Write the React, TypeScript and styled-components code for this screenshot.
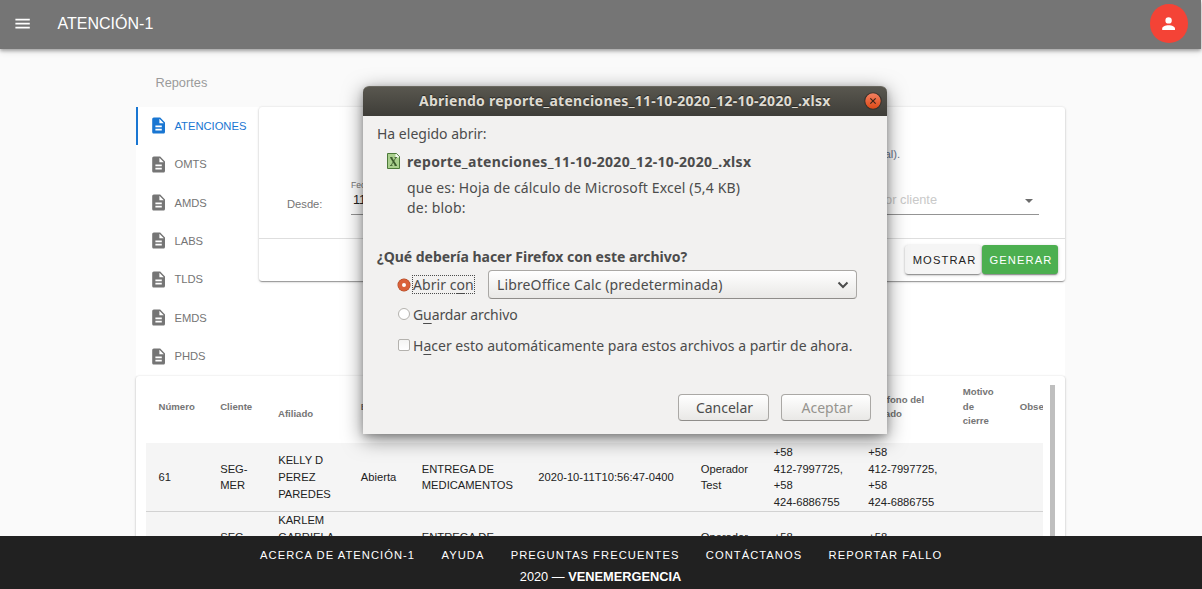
import React from "react";
import styled, { createGlobalStyle } from "styled-components";

const Global = createGlobalStyle`
  * { box-sizing: border-box; }
  body { margin: 0; background: #fafafa; overflow: hidden; font-family: "Liberation Sans", Arial, sans-serif; }
`;

const Page = styled.div`
  position: relative;
  display: flex;
  flex-direction: column;
  width: 1202px;
  height: 589px;
  overflow: hidden;
  background: #fafafa;
`;
const Header = styled.header`
  z-index: 2;
  display: flex;
  align-items: center;
  flex: none;
  width: 1201px;
  height: 49px;
  padding: 0 13px 2px 13px;
  background: #757575;
  color: #fff;
  box-shadow: 0 2px 3px rgba(0, 0, 0, 0.26), 0 3px 6px rgba(0, 0, 0, 0.12);
`;
const Title = styled.h1`
  flex: 1;
  margin: 0 0 0 25.4px;
  font-size: 16px;
  font-weight: 400;
  line-height: 24px;
`;
const Avatar = styled.div`
  display: grid;
  place-items: center;
  width: 38.4px;
  height: 38.4px;
  border-radius: 50%;
  background: #f44336;
`;
const Glyph = styled.svg<{ $size: number }>`
  display: block;
  flex: none;
  width: ${(p) => p.$size}px;
  height: ${(p) => p.$size}px;
  fill: currentColor;
`;
const Main = styled.main`
  flex: 1;
  min-height: 0;
  width: 929px;
  margin-left: 136px;
  overflow-x: visible;
  overflow-y: clip;
`;
const Crumb = styled.div`
  height: 58px;
  padding: 25px 0 0 19.4px;
  font-size: 12.8px;
  line-height: 18px;
  color: #9a9a9a;
`;
const Panel = styled.section`
  display: flex;
  align-items: flex-start;
  height: 269px;
  background: #fff;
`;
const Tabs = styled.nav`
  display: flex;
  flex-direction: column;
  width: 123px;
`;
const Tab = styled.div<{ $active?: boolean }>`
  display: flex;
  align-items: center;
  gap: 6.6px;
  height: 38.4px;
  padding: 0 0 0.8px 10.7px;
  border-left: 2px solid ${(p) => (p.$active ? "#1976d2" : "transparent")};
  color: ${(p) => (p.$active ? "#1976d2" : "#757575")};
  font-size: 11.2px;
`;
const Card = styled.div`
  background: #fff;
  border-radius: 3px;
  box-shadow: 0 2px 1px -1px rgba(0, 0, 0, 0.2), 0 1px 1px rgba(0, 0, 0, 0.14), 0 1px 3px rgba(0, 0, 0, 0.16),
    0 0 2px rgba(0, 0, 0, 0.1);
`;
const FilterCard = styled(Card)`
  flex: 1;
  height: 174px;
`;
const Filters = styled.div`
  display: flex;
  height: 132px;
  padding: 38px 26px 0 28px;
  border-bottom: 1px solid #dedede;
  justify-content: space-between;
`;
const FromField = styled.div`
  display: flex;
  gap: 28.5px;
  padding-top: 33px;
  font-size: 11.2px;
  color: #757575;
`;
const FromLabel = styled.span`
  padding-top: 20px;
`;
const DateField = styled.div`
  width: 130px;
  height: 37px;
  border-bottom: 1px solid #949494;
`;
const FloatLabel = styled.div`
  height: 14px;
  font-size: 8.6px;
  line-height: 14px;
  color: #777;
`;
const DateValue = styled.div`
  padding-left: 2px;
  font-size: 12.8px;
  line-height: 16px;
  color: #222;
`;
const ClientField = styled.div`
  width: 280px;
`;
const Hint = styled.div`
  height: 39px;
  padding-right: 139px;
  font-size: 11.2px;
  line-height: 18px;
  text-align: right;
  color: #687690;
`;
const Select = styled.div`
  display: flex;
  align-items: center;
  justify-content: space-between;
  height: 31px;
  border-bottom: 1px solid #949494;
  padding-left: 119px;
  font-size: 12.8px;
  color: #c9c9c9;
`;
const ClientText = styled.span`
  white-space: nowrap;
`;
const Arrow = styled.span`
  width: 0;
  margin: 4px 6px 0 0;
  border: 4px solid transparent;
  border-top-color: #6c6c6c;
  border-bottom: 0;
`;
const CardActions = styled.div`
  display: flex;
  justify-content: flex-end;
  gap: 1px;
  padding: 6px 7px 0 0;
`;
const ActionButton = styled.button<{ $green?: boolean }>`
  width: 76px;
  height: 29px;
  padding: 0 0 0 ${(p) => (p.$green ? 1 : 2)}px;
  border: 0;
  border-radius: 3px;
  background: ${(p) => (p.$green ? "#4caf50" : "#f5f5f5")};
  color: ${(p) => (p.$green ? "#fff" : "#222")};
  font: 11.2px "Liberation Sans", Arial, sans-serif;
  letter-spacing: 1.1px;
  white-space: nowrap;
  text-indent: 1px;
  box-shadow: 0 2px 1px -1px rgba(0, 0, 0, 0.25), 0 1px 2px rgba(0, 0, 0, 0.25), 0 1px 4px rgba(0, 0, 0, 0.12);
`;
const TableCard = styled(Card)`
  display: flex;
  gap: 7px;
  height: 240px;
  padding: 9px 10px 0;
`;
const ScrollBar = styled.div`
  width: 5px;
  background: #bfbfbf;
`;
const Table = styled.div`
  width: 897px;
  height: 240px;
  overflow: hidden;
`;
const Row = styled.div<{ $head?: boolean }>`
  display: grid;
  grid-template-columns: 62px 58px 82.6px 61px 116.5px 162.5px 73px 94.5px 94.5px 57px 80px;
  align-items: center;
  width: 943px;
  height: ${(p) => (p.$head ? "58px" : "69px")};
  padding: ${(p) => (p.$head ? "0 0 14px" : "0.8px 0 0")};
  border-bottom: ${(p) => (p.$head ? "0" : "1px solid #d2d2d2")};
  background: ${(p) => (p.$head ? "#fff" : "#f5f5f5")};
  color: ${(p) => (p.$head ? "#757575" : "#222")};
  font-size: ${(p) => (p.$head ? "9.6px" : "11.2px")};
  font-weight: ${(p) => (p.$head ? 700 : 400)};
  line-height: ${(p) => (p.$head ? "14.4px" : "16.8px")};
  &:last-child {
    height: 68px;
    padding-top: 0;
  }
`;
const Cell = styled.div<{ $drop?: boolean }>`
  padding: ${(p) => (p.$drop ? "15px 0 0 12px" : "0 0 0 12.2px")};
  white-space: pre;
  &:first-child {
    padding-left: 12.5px;
  }
`;
const Footer = styled.footer`
  z-index: 2;
  flex: none;
  height: 53px;
  padding-top: 11px;
  background: #212121;
  color: #fff;
  text-align: center;
`;
const Links = styled.div`
  display: flex;
  justify-content: center;
  gap: 26.3px;
  height: 18px;
  padding-left: 0.4px;
  font-size: 11.2px;
  line-height: 17px;
  letter-spacing: 1.05px;
`;
const Copy = styled.div`
  padding: 4px 1px 0 0;
  font-size: 12.8px;
  line-height: 16px;
`;

const Dialog = styled.div`
  position: absolute;
  z-index: 5;
  left: 363px;
  top: 86px;
  width: 524px;
  height: 348px;
  border-radius: 6px 6px 0 0;
  background: #f2f1f0;
  color: #4c4c4c;
  font-family: "Noto Sans", "Open Sans", sans-serif;
  font-size: 14px;
  box-shadow: 0 5px 20px rgba(0, 0, 0, 0.5), 0 2px 6px rgba(0, 0, 0, 0.2);
`;
const TitleBar = styled.div`
  display: flex;
  align-items: center;
  height: 30px;
  padding: 0 5px 1px 56px;
  border-radius: 6px 6px 0 0;
  border-top: 1px solid #6a6860;
  background: linear-gradient(#59574f, #3e3d38);
  color: #dfdbd2;
  font-weight: 700;
`;
const Caption = styled.div`
  flex: 1;
  padding-bottom: 1px;
  text-shadow: 0 -1px 1px rgba(0, 0, 0, 0.5);
`;
const Body = styled.div`
  height: 318px;
  padding: 7px 17px 0 14px;
`;
const Fit = styled.span<{ $ls?: number }>`
  letter-spacing: ${(p) => p.$ls ?? 0}px;
  white-space: nowrap;
`;
const Line = styled.div<{ $h?: number; $top?: number; $indent?: number; $bold?: boolean; $gap?: number }>`
  display: flex;
  align-items: center;
  gap: ${(p) => p.$gap ?? 0}px;
  height: ${(p) => p.$h ?? 20}px;
  margin-top: ${(p) => p.$top ?? 0}px;
  padding-left: ${(p) => p.$indent ?? 0}px;
  font-weight: ${(p) => (p.$bold ? 700 : 400)};
`;
const Radio = styled.span<{ $on?: boolean }>`
  flex: none;
  width: 12px;
  height: 12px;
  margin-right: 3px;
  border-radius: 50%;
  border: ${(p) => (p.$on ? "4px solid #d9613a" : "1px solid #b4b2ae")};
  background: #fff;
  box-shadow: ${(p) => (p.$on ? "0 0 0 0.5px #a8441f" : "none")};
`;
const Check = styled.span`
  flex: none;
  width: 12px;
  height: 12px;
  margin-right: 3px;
  border: 1px solid #b4b2ae;
  border-radius: 2px;
  background: linear-gradient(#f4f4f3, #fff);
`;
const Focus = styled.span`
  flex: none;
  width: 63px;
  height: 19px;
  margin: 0 13px 0 -1px;
  border: 1px dotted #4c4c4c;
  line-height: 17px;
`;
const Accel = styled.span`
  text-decoration: underline;
  text-decoration-thickness: 1px;
  text-underline-offset: 3px;
  text-decoration-skip-ink: none;
`;
const Combo = styled.div`
  display: flex;
  flex: none;
  align-items: center;
  justify-content: space-between;
  width: 369px;
  height: 29px;
  padding: 0 7px 0 8px;
  border: 1px solid #aaa8a5;
  border-bottom-color: #8f8d8a;
  border-radius: 4px;
  background: linear-gradient(#fff, #e9e8e6);
`;
const Buttons = styled.div`
  display: flex;
  justify-content: flex-end;
  gap: 12px;
  margin: 39px -1px 0 0;
`;
const Button = styled.button<{ $off?: boolean; $w: number }>`
  width: ${(p) => p.$w}px;
  height: 27px;
  padding: 0 0 0 2px;
  border: 1px solid #aaa8a5;
  border-bottom-color: #8f8d8a;
  border-radius: 4px;
  background: linear-gradient(#fff, #e9e8e6);
  color: ${(p) => (p.$off ? "#96948f" : "#4c4c4c")};
  font: 14px "Noto Sans", sans-serif;
`;

const DocIcon = () => (
  <Glyph $size={19.2} viewBox="0 0 24 24">
    <path d="M14 2H6c-1.100 0-1.990.9-1.990 2L4 20c0 1.100.89 2 1.990 2H18c1.100 0 2-.9 2-2V8l-6-6zm2 16H8v-2h8v2zm0-4H8v-2h8v2zm-3-5V3.500L18.500 9H13z" />
  </Glyph>
);

const tabs = ["ATENCIONES", "OMTS", "AMDS", "LABS", "TLDS", "EMDS", "PHDS"];
const head = ["Número", "Cliente", "Afiliado", "Estado", "", "", "", "", "Teléfono del\nafiliado", "Motivo\nde\ncierre", "Observación"];
const phones = "+58\n412-7997725,\n+58\n424-6886755";
const rows = [
  ["61", "SEG-\nMER", "KELLY D\nPEREZ\nPAREDES", "Abierta", "ENTREGA DE\nMEDICAMENTOS", "2020-10-11T10:56:47-0400", "Operador\nTest", phones, phones, "", ""],
  ["", "SEG-\n ", "KARLEM\nGABRIELA\n\n ", "", "ENTREGA DE\n ", "", "Operador\n ", "+58\n ", "+58\n ", "", ""],
];
const links = ["ACERCA DE ATENCIÓN-1", "AYUDA", "PREGUNTAS FRECUENTES", "CONTÁCTANOS", "REPORTAR FALLO"];

export default function App() {
  return (
    <Page>
      <Global />
      <Header>
        <Glyph $size={19.2} viewBox="0 0 24 24">
          <path d="M3 6h18v2H3V6m0 5h18v2H3v-2m0 5h18v2H3v-2z" />
        </Glyph>
        <Title>ATENCIÓN-1</Title>
        <Avatar>
          <Glyph $size={19.2} viewBox="0 0 24 24">
            <path d="M12 4a4 4 0 0 1 4 4 4 4 0 0 1-4 4 4 4 0 0 1-4-4 4 4 0 0 1 4-4m0 10c4.420 0 8 1.790 8 4v2H4v-2c0-2.210 3.580-4 8-4z" />
          </Glyph>
        </Avatar>
      </Header>
      <Main>
        <Crumb>Reportes</Crumb>
        <Panel>
          <Tabs>
            {tabs.map((t, i) => (
              <Tab key={t} $active={i === 0}>
                <DocIcon />
                {t}
              </Tab>
            ))}
          </Tabs>
          <FilterCard>
            <Filters>
              <FromField>
                <FromLabel>Desde:</FromLabel>
                <DateField>
                  <FloatLabel>Fecha</FloatLabel>
                  <DateValue>11-10-2020</DateValue>
                </DateField>
              </FromField>
              <ClientField>
                <Hint>(opcional).</Hint>
                <Select>
                  <ClientText>por cliente</ClientText>
                  <Arrow />
                </Select>
              </ClientField>
            </Filters>
            <CardActions>
              <ActionButton>MOSTRAR</ActionButton>
              <ActionButton $green>GENERAR</ActionButton>
            </CardActions>
          </FilterCard>
        </Panel>
        <TableCard>
          <Table>
            <Row $head>
              {head.map((h, i) => (
                <Cell key={i} $drop={i === 2}>{h}</Cell>
              ))}
            </Row>
            {rows.map((r, i) => (
              <Row key={i}>
                {r.map((c, j) => (
                  <Cell key={j}>{c}</Cell>
                ))}
              </Row>
            ))}
          </Table>
          <ScrollBar />
        </TableCard>
      </Main>
      <Footer>
        <Links>
          {links.map((l) => (
            <span key={l}>{l}</span>
          ))}
        </Links>
        <Copy>
          2020 — <b>VENEMERGENCIA</b>
        </Copy>
      </Footer>

      <Dialog>
        <TitleBar>
          <Caption>
            <Fit $ls={0.26}>Abriendo reporte_atenciones_11-10-2020_12-10-2020_.xlsx</Fit>
          </Caption>
          <Glyph $size={18} viewBox="0 0 17 17">
            <defs>
              <linearGradient id="close" x1="0" y1="0" x2="0" y2="1">
                <stop offset="0" stopColor="#f58263" />
                <stop offset="1" stopColor="#dd4814" />
              </linearGradient>
            </defs>
            <circle cx="8.500" cy="8.500" r="7.800" fill="url(#close)" stroke="#35322d" />
            <path d="M6 6l5 5M11 6l-5 5" stroke="#3c2418" strokeWidth="1.100" />
          </Glyph>
        </TitleBar>
        <Body>
          <Line $h={20}><Fit>Ha elegido abrir:</Fit></Line>
          <Line $h={33} $top={2} $indent={8} $gap={5} $bold>
            <Glyph $size={17} viewBox="0 0 17 17">
              <path d="M2.500.5h9l3 3v12h-12z" fill="#a9cf8d" stroke="#4d7a3a" />
              <path d="M10.500 1h1l2.500 2.500v1h-3.500z" fill="#f4f8f0" />
              <path d="M6 4.500l5 8" stroke="#3b5a2c" strokeWidth="1.700" />
              <path d="M11 4.500l-5 8M5 12.500h2.500M9.500 12.500h2.500M5 4.500h2.500M9.500 4.500h2.500" stroke="#3b5a2c" strokeWidth="0.800" />
            </Glyph>
            <Fit $ls={0.32}>reporte_atenciones_11-10-2020_12-10-2020_.xlsx</Fit>
          </Line>
          <Line $h={18} $indent={30}><Fit $ls={0.13}>que es: Hoja de cálculo de Microsoft Excel (5,4 KB)</Fit></Line>
          <Line $h={22} $indent={30}><Fit $ls={0.2}>de: blob:</Fit></Line>
          <Line $top={28} $bold><Fit $ls={-0.02}>¿Qué debería hacer Firefox con este archivo?</Fit></Line>
          <Line $h={29} $top={4} $indent={21}>
            <Radio $on />
            <Focus><Fit $ls={0.05}>Abrir c<Accel>o</Accel>n</Fit></Focus>
            <Combo>
              <Fit $ls={0.13}>LibreOffice Calc (predeterminada)</Fit>
              <Glyph $size={12} viewBox="0 0 12 12">
                <path d="M1.500 3.500l4.500 4.500 4.500-4.500" fill="none" stroke="#4c4c4c" strokeWidth="2" />
              </Glyph>
            </Combo>
          </Line>
          <Line $top={5} $indent={21}>
            <Radio />
            <Fit $ls={-0.1}>G<Accel>u</Accel>ardar archivo</Fit>
          </Line>
          <Line $top={11} $indent={21}>
            <Check />
            <Fit $ls={0.01}>H<Accel>a</Accel>cer esto automáticamente para estos archivos a partir de ahora.</Fit>
          </Line>
          <Buttons>
            <Button $w={91}>Cancelar</Button>
            <Button $w={90} $off>Aceptar</Button>
          </Buttons>
        </Body>
      </Dialog>
    </Page>
  );
}
